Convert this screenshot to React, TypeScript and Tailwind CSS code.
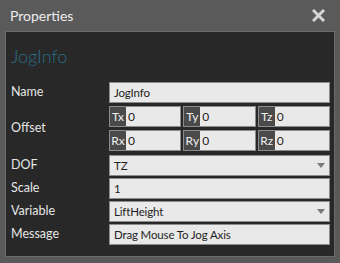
import React from "react";

const font = { fontFamily: 'Lato, "Open Sans", "Liberation Sans", sans-serif' };

function Field({ value, dropdown }: { value: string; dropdown?: boolean }) {
  return (
    <div className="relative flex h-[21px] w-[221px] items-center border border-[#8c8c8c] bg-[#e9e9e9] pl-[4px] text-[11.5px] tracking-[-0.15px] text-[#1e1e1e]">
      <span>{value}</span>
      {dropdown && (
        <span className="absolute right-[4px] top-[7px] h-0 w-0 border-x-[4px] border-t-[5px] border-x-transparent border-t-[#7a7a7a]" />
      )}
    </div>
  );
}

function AxisBox({ axis, value }: { axis: string; value: string }) {
  return (
    <div className="flex h-[21px] flex-1 border border-[#8c8c8c] bg-[#e9e9e9] text-[12px]">
      <span className="flex w-[16px] items-center justify-center bg-[#4a4a4a] text-[#f0f0f0]">
        {axis}
      </span>
      <span className="flex items-center pl-[2px] text-[#1e1e1e]">{value}</span>
    </div>
  );
}

function Row({ label, children }: { label: string; children: React.ReactNode }) {
  return (
    <div className="flex items-center">
      <div className="w-[98px] text-[12.5px] text-[#e6e6e6]">{label}</div>
      {children}
    </div>
  );
}

export default function App() {
  return (
    <div className="flex h-[263px] w-[340px] flex-col bg-[#5a5a5a]" style={font}>
      {/* Title bar */}
      <div className="flex h-[31px] items-center justify-between pl-[10px] pr-[15px]">
        <span className="text-[14px] text-[#ececec]">Properties</span>
        <svg width="13" height="13" viewBox="0 0 13 13">
          <path d="M2 2 L11 11 M11 2 L2 11" stroke="#d4d4d4" strokeWidth="3" strokeLinecap="square" />
        </svg>
      </div>

      {/* Panel */}
      <div className="mx-[5px] flex h-[226px] flex-col border border-[#6b6b6b] bg-[#282828] pl-[5px] pr-[3px]">
        <div className="mt-[11px] h-[26px] text-[18px] font-light leading-[26px] text-[#2a6e89]">
          JogInfo
        </div>

        <div className="mt-[13px] flex flex-col">
          <Row label="Name">
            <Field value="JogInfo" />
          </Row>

          <div className="mt-[3px] flex items-center">
            <div className="w-[98px] text-[12.5px] text-[#e6e6e6]">Offset</div>
            <div className="flex w-[221px] flex-col gap-[3px]">
              <div className="flex gap-[2px]">
                <AxisBox axis="Tx" value="0" />
                <AxisBox axis="Ty" value="0" />
                <AxisBox axis="Tz" value="0" />
              </div>
              <div className="flex gap-[2px]">
                <AxisBox axis="Rx" value="0" />
                <AxisBox axis="Ry" value="0" />
                <AxisBox axis="Rz" value="0" />
              </div>
            </div>
          </div>

          <div className="mt-[4px] flex flex-col gap-[2px]">
            <Row label="DOF">
              <Field value="TZ" dropdown />
            </Row>
            <Row label="Scale">
              <Field value="1" />
            </Row>
            <Row label="Variable">
              <Field value="LiftHeight" dropdown />
            </Row>
            <Row label="Message">
              <Field value="Drag Mouse To Jog Axis" />
            </Row>
          </div>
        </div>
      </div>
    </div>
  );
}
